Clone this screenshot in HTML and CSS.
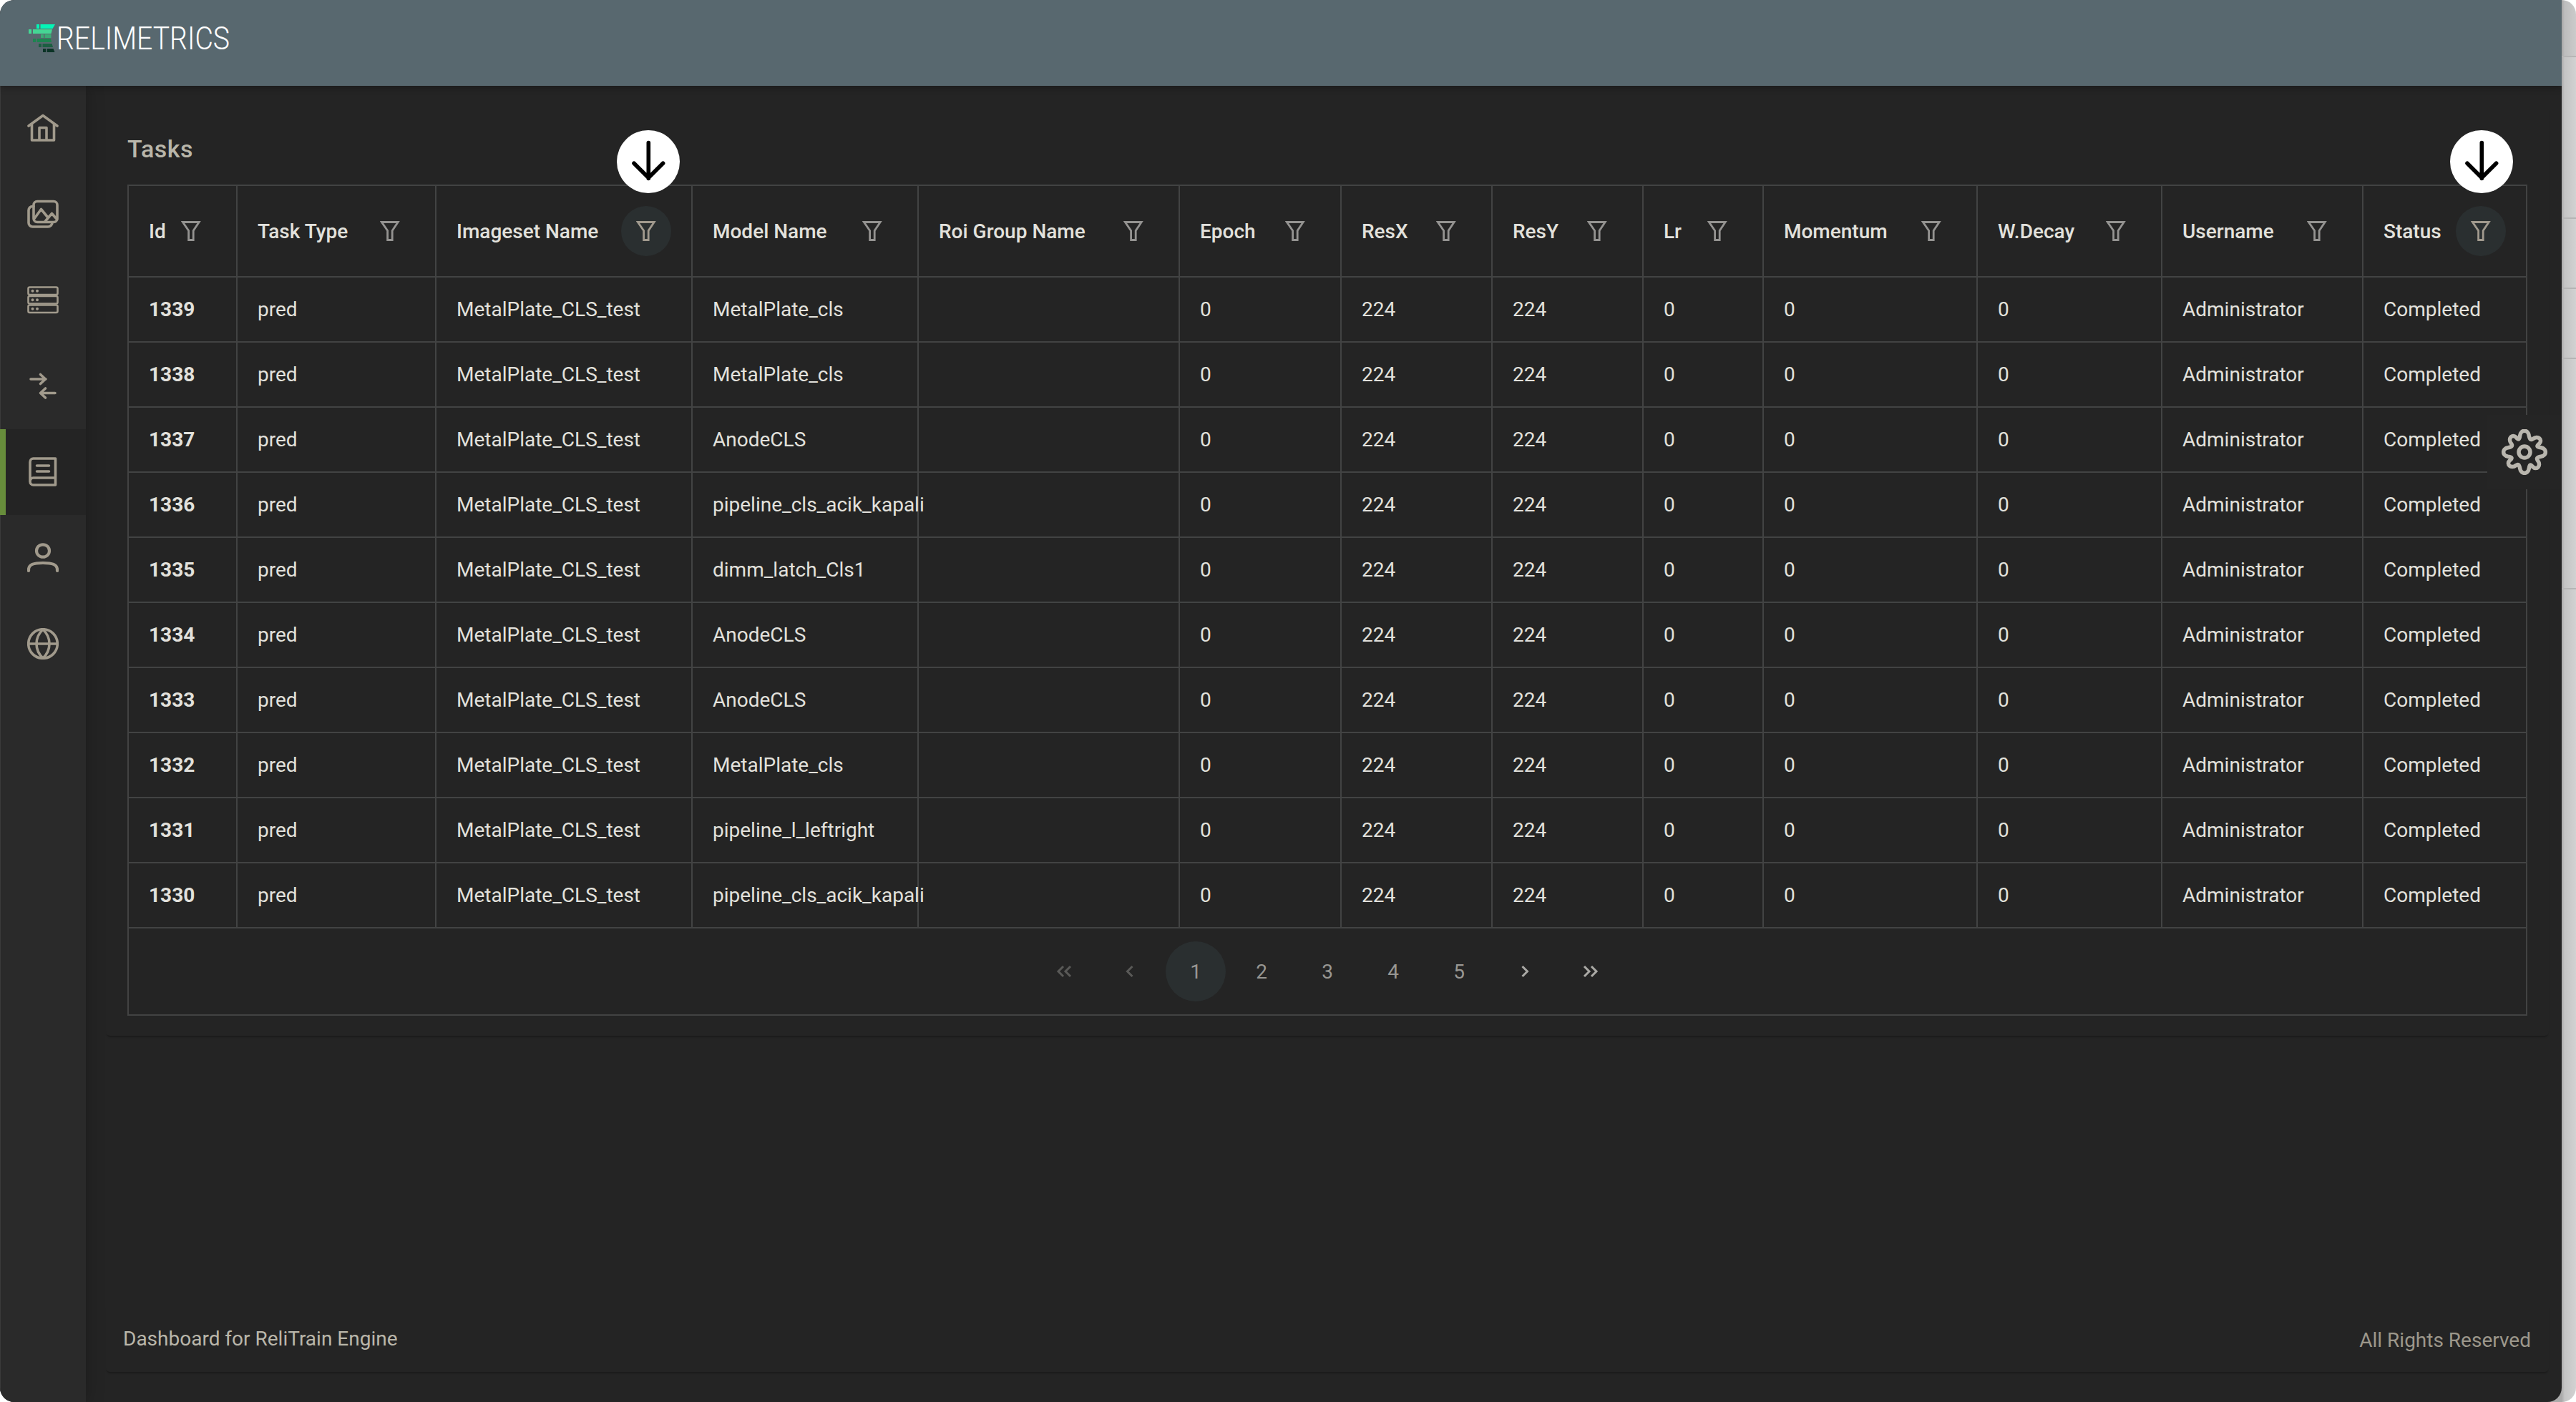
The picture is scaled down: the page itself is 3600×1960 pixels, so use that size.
FILE: index.html
```html
<!DOCTYPE html>
<html lang="en">
<head>
    <meta charset="UTF-8">
    <meta name="viewport" content="width=device-width, initial-scale=1.0">
    <title>ReliTrain - Tasks</title>
    <link rel="stylesheet" href="styles.css">
</head>
<body>
    <svg class="sprite" width="0" height="0">
        <symbol id="filter" viewBox="0 0 28 28">
            <path d="M2.4 1.5h22.8l-8 11.9v13.1h-6.6V13.4z"/>
        </symbol>
        <symbol id="arrow" viewBox="0 0 88 88">
            <path d="M44.3 17.5v50M24 46.3l20.3 20.3 20.3-20.3"/>
        </symbol>
    </svg>

    <div class="backdrop">
        <div class="back-row row-1"></div>
        <div class="back-row row-2"></div>
        <div class="back-row row-3"></div>
        <div class="back-row row-4"></div>
        <div class="back-row row-5"></div>
    </div>

    <div class="window">
        <header class="topbar">
            <svg class="logo" width="290" height="58" viewBox="0 0 290 58">
                <path fill="#04f5b6" d="M11 3h4v6h-4zM16.5 3H37l-3.500 6h-17z"/>
                <path fill="#45d694" d="M0 10h4v6H0zM6 10h27l-1.500 6H6z"/>
                <path fill="#3cab75" d="M17 17h4v5h-4zM22.500 17h9v5h-9z"/>
                <path fill="#1d8450" d="M6 23h4v5H6zM11.500 23h19.500l1 5H11.500z"/>
                <path fill="#1c5f42" d="M14 30h4v5h-4zM19.500 30h13l1.500 5H19.500z"/>
                <path fill="#0b3326" d="M20 37h4v5h-4zM25.500 37h9l2 5h-11z"/>
                <text x="39" y="38" textLength="242" lengthAdjust="spacingAndGlyphs">RELIMETRICS</text>
            </svg>
        </header>

        <div class="layout">
            <nav class="sidebar">
                <a class="nav-item">
                    <svg viewBox="0 0 44 44"><path d="M2 18 22 3.500 42 18M6.500 15.500V38h31V15.500M17 38V20.500h10V38"/></svg>
                </a>
                <a class="nav-item">
                    <svg viewBox="0 0 44 44"><rect x="9" y="3.500" width="33" height="29" rx="5"/><path d="M9 10.500H7.500A5.500 5.500 0 0 0 2 16v17.500A5.500 5.500 0 0 0 7.500 39H29a6 6 0 0 0 6-6M10 27.500l9.500-13 9 11M25.500 31l9-10.500 7 8"/></svg>
                </a>
                <a class="nav-item">
                    <svg class="thin" viewBox="0 0 44 44"><rect x="1.500" y="3.500" width="41" height="10.500" rx="2"/><rect x="1.500" y="16" width="41" height="10.500" rx="2"/><rect x="1.500" y="28.500" width="41" height="10.500" rx="2"/><path class="dots" d="M7.500 8.800h.01M14 8.800h.01M7.500 21.300h.01M14 21.300h.01M7.500 33.800h.01M14 33.800h.01"/></svg>
                </a>
                <a class="nav-item">
                    <svg viewBox="0 0 44 44"><path d="M5 12h21M18.500 5.500l7 6.500-7 6.500M39 31.500H18.500M25.500 25l-7 6.500 7 6.500"/></svg>
                </a>
                <a class="nav-item active">
                    <svg viewBox="0 0 44 44"><path d="M8.500 3h31v37h-31c-2.500 0-4.500-2.200-4.500-5V8c0-2.800 2-5 4.500-5zM4 35.500c0-3.500 2-5.500 4.500-5.500h31M13.500 13H30.500M13.500 21H30.500"/></svg>
                </a>
                <a class="nav-item">
                    <svg class="thick" viewBox="0 0 44 44"><ellipse cx="22" cy="12" rx="9" ry="8.700"/><path d="M2 40v-1.500C2 31 9 29 22 29s20 2 20 9.500V40"/></svg>
                </a>
                <a class="nav-item">
                    <svg viewBox="0 0 44 44"><circle cx="22" cy="22" r="20.300"/><path d="M2 22h40M22 2c-12 11-12 29 0 40M22 2c12 11 12 29 0 40"/></svg>
                </a>
            </nav>

            <main class="content">
                <section class="card">
                    <h1>Tasks</h1>
                    <table class="tasks">
                        <colgroup>
                            <col class="c-id"><col class="c-type"><col class="c-imageset"><col class="c-model"><col class="c-roi"><col class="c-epoch"><col class="c-res"><col class="c-res"><col class="c-lr"><col class="c-momentum"><col class="c-decay"><col class="c-user"><col class="c-status">
                        </colgroup>
                        <thead>
                            <tr>
                                <th><div class="head">Id<button class="filter"><svg><use href="#filter"/></svg></button></div></th>
                                <th><div class="head">Task Type<button class="filter"><svg><use href="#filter"/></svg></button></div></th>
                                <th><div class="head">Imageset Name<button class="filter on"><svg><use href="#filter"/></svg><span class="pointer"><svg><use href="#arrow"/></svg></span></button></div></th>
                                <th><div class="head">Model Name<button class="filter"><svg><use href="#filter"/></svg></button></div></th>
                                <th><div class="head">Roi Group Name<button class="filter"><svg><use href="#filter"/></svg></button></div></th>
                                <th><div class="head">Epoch<button class="filter"><svg><use href="#filter"/></svg></button></div></th>
                                <th><div class="head">ResX<button class="filter"><svg><use href="#filter"/></svg></button></div></th>
                                <th><div class="head">ResY<button class="filter"><svg><use href="#filter"/></svg></button></div></th>
                                <th><div class="head">Lr<button class="filter"><svg><use href="#filter"/></svg></button></div></th>
                                <th><div class="head">Momentum<button class="filter"><svg><use href="#filter"/></svg></button></div></th>
                                <th><div class="head">W.Decay<button class="filter"><svg><use href="#filter"/></svg></button></div></th>
                                <th><div class="head">Username<button class="filter"><svg><use href="#filter"/></svg></button></div></th>
                                <th><div class="head">Status<button class="filter on"><svg><use href="#filter"/></svg><span class="pointer"><svg><use href="#arrow"/></svg></span></button></div></th>
                            </tr>
                        </thead>
                        <tbody>
                            <tr><td>1339</td><td>pred</td><td>MetalPlate_CLS_test</td><td>MetalPlate_cls</td><td></td><td>0</td><td>224</td><td>224</td><td>0</td><td>0</td><td>0</td><td>Administrator</td><td>Completed</td></tr>
                            <tr><td>1338</td><td>pred</td><td>MetalPlate_CLS_test</td><td>MetalPlate_cls</td><td></td><td>0</td><td>224</td><td>224</td><td>0</td><td>0</td><td>0</td><td>Administrator</td><td>Completed</td></tr>
                            <tr><td>1337</td><td>pred</td><td>MetalPlate_CLS_test</td><td>AnodeCLS</td><td></td><td>0</td><td>224</td><td>224</td><td>0</td><td>0</td><td>0</td><td>Administrator</td><td>Completed</td></tr>
                            <tr><td>1336</td><td>pred</td><td>MetalPlate_CLS_test</td><td>pipeline_cls_acik_kapali</td><td></td><td>0</td><td>224</td><td>224</td><td>0</td><td>0</td><td>0</td><td>Administrator</td><td>Completed</td></tr>
                            <tr><td>1335</td><td>pred</td><td>MetalPlate_CLS_test</td><td>dimm_latch_Cls1</td><td></td><td>0</td><td>224</td><td>224</td><td>0</td><td>0</td><td>0</td><td>Administrator</td><td>Completed</td></tr>
                            <tr><td>1334</td><td>pred</td><td>MetalPlate_CLS_test</td><td>AnodeCLS</td><td></td><td>0</td><td>224</td><td>224</td><td>0</td><td>0</td><td>0</td><td>Administrator</td><td>Completed</td></tr>
                            <tr><td>1333</td><td>pred</td><td>MetalPlate_CLS_test</td><td>AnodeCLS</td><td></td><td>0</td><td>224</td><td>224</td><td>0</td><td>0</td><td>0</td><td>Administrator</td><td>Completed</td></tr>
                            <tr><td>1332</td><td>pred</td><td>MetalPlate_CLS_test</td><td>MetalPlate_cls</td><td></td><td>0</td><td>224</td><td>224</td><td>0</td><td>0</td><td>0</td><td>Administrator</td><td>Completed</td></tr>
                            <tr><td>1331</td><td>pred</td><td>MetalPlate_CLS_test</td><td>pipeline_l_leftright</td><td></td><td>0</td><td>224</td><td>224</td><td>0</td><td>0</td><td>0</td><td>Administrator</td><td>Completed</td></tr>
                            <tr><td>1330</td><td>pred</td><td>MetalPlate_CLS_test</td><td>pipeline_cls_acik_kapali</td><td></td><td>0</td><td>224</td><td>224</td><td>0</td><td>0</td><td>0</td><td>Administrator</td><td>Completed</td></tr>
                        </tbody>
                    </table>
                    <div class="paginator">
                        <button class="page disabled"><svg viewBox="0 0 24 20"><path d="M11 3l-7 7 7 7M21 3l-7 7 7 7"/></svg></button>
                        <button class="page disabled"><svg viewBox="0 0 24 20"><path d="M15.500 3l-7 7 7 7"/></svg></button>
                        <button class="page current">1</button>
                        <button class="page">2</button>
                        <button class="page">3</button>
                        <button class="page">4</button>
                        <button class="page">5</button>
                        <button class="page"><svg viewBox="0 0 24 20"><path d="M8.500 3l7 7-7 7"/></svg></button>
                        <button class="page"><svg viewBox="0 0 24 20"><path d="M3 3l7 7-7 7M13 3l7 7-7 7"/></svg></button>
                    </div>
                </section>

                <footer class="footer">
                    <span>Dashboard for ReliTrain Engine</span>
                    <span class="rights">All Rights Reserved</span>
                </footer>
            </main>
        </div>

        <button class="settings">
            <svg viewBox="-32 -32 64 64"><circle r="8"/><path d="M-6.300-23C-5-32 5-32 6.300-23C7.500-17 9-16.500 11.800-18.500C19-24 26-17 20.700-11.800C16.500-8.500 17-7 23-6.300C31.500-5 31.500 5 23 6.300C17 7.500 16.500 9 18.500 11.800C24 19 17 26 11.800 20.700C8.500 16.500 7 17 6.300 23C5 31.500-5 31.500-6.300 23C-7.500 17-9 16.500-11.800 18.500C-19 24-26 17-20.700 11.800C-16.500 8.500-17 7-23 6.300C-31.500 5-31.500-5-23-6.300C-17-7.500-16.500-9-18.500-11.800C-24-19-17-26-11.800-20.700C-8.500-16.500-7-17-6.300-23z"/></svg>
        </button>
    </div>
</body>
</html>
```
FILE: styles.css
```css
:root {
    --surface: #242424;
    --sidebar: #2a2a2a;
    --topbar: #58686f;
    --border-color: #424343;
    --text-primary: #e2e1dc;
    --text-secondary: #b9b6aa;
    --icon-color: #a19a8c;
    --highlight: #2a2f30;
    --accent-color: #678d3b;
}

* {
    box-sizing: border-box;
}

body {
    margin: 0;
    height: 1960px;
    position: relative;
    overflow: hidden;
    background: #fff;
    font-family: Roboto, "Liberation Sans", sans-serif;
    font-size: 28px;
    color: var(--text-primary);
}

button {
    border: none;
    background: none;
    padding: 0;
    font: inherit;
    color: inherit;
}

.sprite {
    position: absolute;
}

/* window lying behind the app, only its right edge is visible */
.backdrop {
    position: absolute;
    top: 0;
    right: 0;
    width: 60px;
    height: 1960px;
    border-radius: 0 20px 20px 0;
    background: linear-gradient(90deg, #aaa 40px, #c4c4c4 44px, #d2d2d2 60px);
}

.back-row {
    border-bottom: 2px solid #b5b5b5;
}

.row-1 {
    height: 80px;
    border-top-right-radius: 20px;
    background: rgba(0, 0, 0, 0.03);
}

.row-2 {
    height: 226px;
}

.row-3 {
    height: 98px;
}

.row-4 {
    height: 98px;
}

.row-5 {
    height: 322px;
}

.window {
    position: relative;
    width: 3580px;
    height: 1960px;
    display: flex;
    flex-direction: column;
    overflow: hidden;
    border-radius: 20px 0 20px 20px;
    background: var(--surface);
}

.topbar {
    height: 120px;
    flex: none;
    padding: 31px 40px;
    background: var(--topbar);
    box-shadow: 0 2px 10px rgba(0, 0, 0, 0.3);
    z-index: 1;
}

.logo {
    display: block;
    overflow: visible;
}

.logo text {
    font-family: Roboto, sans-serif;
    font-size: 43.5px;
    font-weight: 300;
    fill: #fff;
}

.layout {
    flex: 1;
    display: flex;
}

.sidebar {
    width: 120px;
    background: var(--sidebar);
    box-shadow: inset 1px 0 #3a3a3a, 0 0 24px rgba(0, 0, 0, 0.25);
}

.nav-item {
    height: 120px;
    display: flex;
    align-items: center;
    justify-content: center;
}

.nav-item.active {
    padding-right: 8px;
    border-left: 8px solid var(--accent-color);
    background: var(--surface);
}

.nav-item svg {
    width: 44px;
    height: 44px;
    fill: none;
    stroke: var(--icon-color);
    stroke-width: 3.6;
    stroke-linecap: round;
    stroke-linejoin: round;
}

.nav-item .thin {
    stroke-width: 2.6;
}

.nav-item .thick {
    stroke-width: 4.2;
}

.nav-item .dots {
    stroke-width: 4;
}

.content {
    flex: 1;
    display: flex;
    flex-direction: column;
    justify-content: space-between;
    padding: 28px 18px 42px 28px;
}

.card,
.footer {
    border-radius: 6px;
    box-shadow: 0 3px 2px -1px rgba(0, 0, 0, 0.25);
}

.card {
    height: 1300px;
    padding: 38px 30px 28px;
}

h1 {
    margin: 0;
    height: 72px;
    font-size: 34px;
    line-height: 44px;
    font-weight: 500;
    letter-spacing: 0.5px;
    color: var(--text-secondary);
}

.tasks {
    width: 3354px;
    table-layout: fixed;
    border-spacing: 0;
    border-top: 2px solid var(--border-color);
    border-left: 2px solid var(--border-color);
}

.c-id { width: 152px; }
.c-type { width: 278px; }
.c-imageset { width: 358px; }
.c-model { width: 316px; }
.c-roi { width: 365px; }
.c-epoch { width: 226px; }
.c-res { width: 211px; }
.c-lr { width: 168px; }
.c-momentum { width: 299px; }
.c-decay { width: 258px; }
.c-user { width: 281px; }
.c-status { width: 229px; }

th,
td {
    padding: 0 28px;
    border-right: 2px solid var(--border-color);
    border-bottom: 2px solid var(--border-color);
    text-align: left;
    white-space: nowrap;
}

th {
    height: 128px;
    font-weight: 500;
}

td {
    height: 91px;
}

td:first-child {
    font-weight: 700;
}

.head {
    display: flex;
    align-items: center;
    justify-content: space-between;
}

.filter {
    position: relative;
    flex: none;
    width: 70px;
    height: 70px;
    border-radius: 50%;
    display: flex;
    align-items: center;
    justify-content: center;
}

.filter > svg {
    width: 28px;
    height: 28px;
    fill: none;
    stroke: #949391;
    stroke-width: 2.8;
}

.filter.on {
    background: var(--highlight);
}

.filter.on > svg {
    stroke: #a19a8e;
}

/* round marker above a highlighted filter */
.pointer {
    position: absolute;
    top: -106px;
    left: -6px;
    width: 88px;
    height: 88px;
    border-radius: 50%;
    background: #fff;
}

th:last-child .pointer {
    left: -8px;
}

.pointer svg {
    display: block;
    width: 88px;
    height: 88px;
    fill: none;
    stroke: #000;
    stroke-width: 5.6;
    stroke-linecap: round;
    stroke-linejoin: round;
}

.paginator {
    width: 3354px;
    height: 122px;
    display: flex;
    align-items: center;
    justify-content: center;
    gap: 8px;
    border: 2px solid var(--border-color);
    border-top: none;
    color: #989793;
}

.page {
    width: 84px;
    height: 84px;
    border-radius: 50%;
    display: flex;
    align-items: center;
    justify-content: center;
}

.page.current {
    background: var(--highlight);
}

.page.disabled {
    opacity: 0.4;
}

.page svg {
    width: 24px;
    height: 20px;
    fill: none;
    stroke: #aaa9a5;
    stroke-width: 3;
}

.footer {
    height: 96px;
    display: flex;
    justify-content: space-between;
    align-items: center;
    padding: 2px 25px 0 24px;
    color: var(--text-secondary);
}

.rights {
    padding-top: 4px;
    color: #9c978b;
}

.settings {
    position: absolute;
    top: 580px;
    right: 0;
    width: 104px;
    height: 104px;
    display: flex;
    align-items: center;
    justify-content: center;
    background: #252525;
}

.settings svg {
    width: 64px;
    height: 64px;
    fill: none;
    stroke: #b9b6ae;
    stroke-width: 5.5;
}
```
